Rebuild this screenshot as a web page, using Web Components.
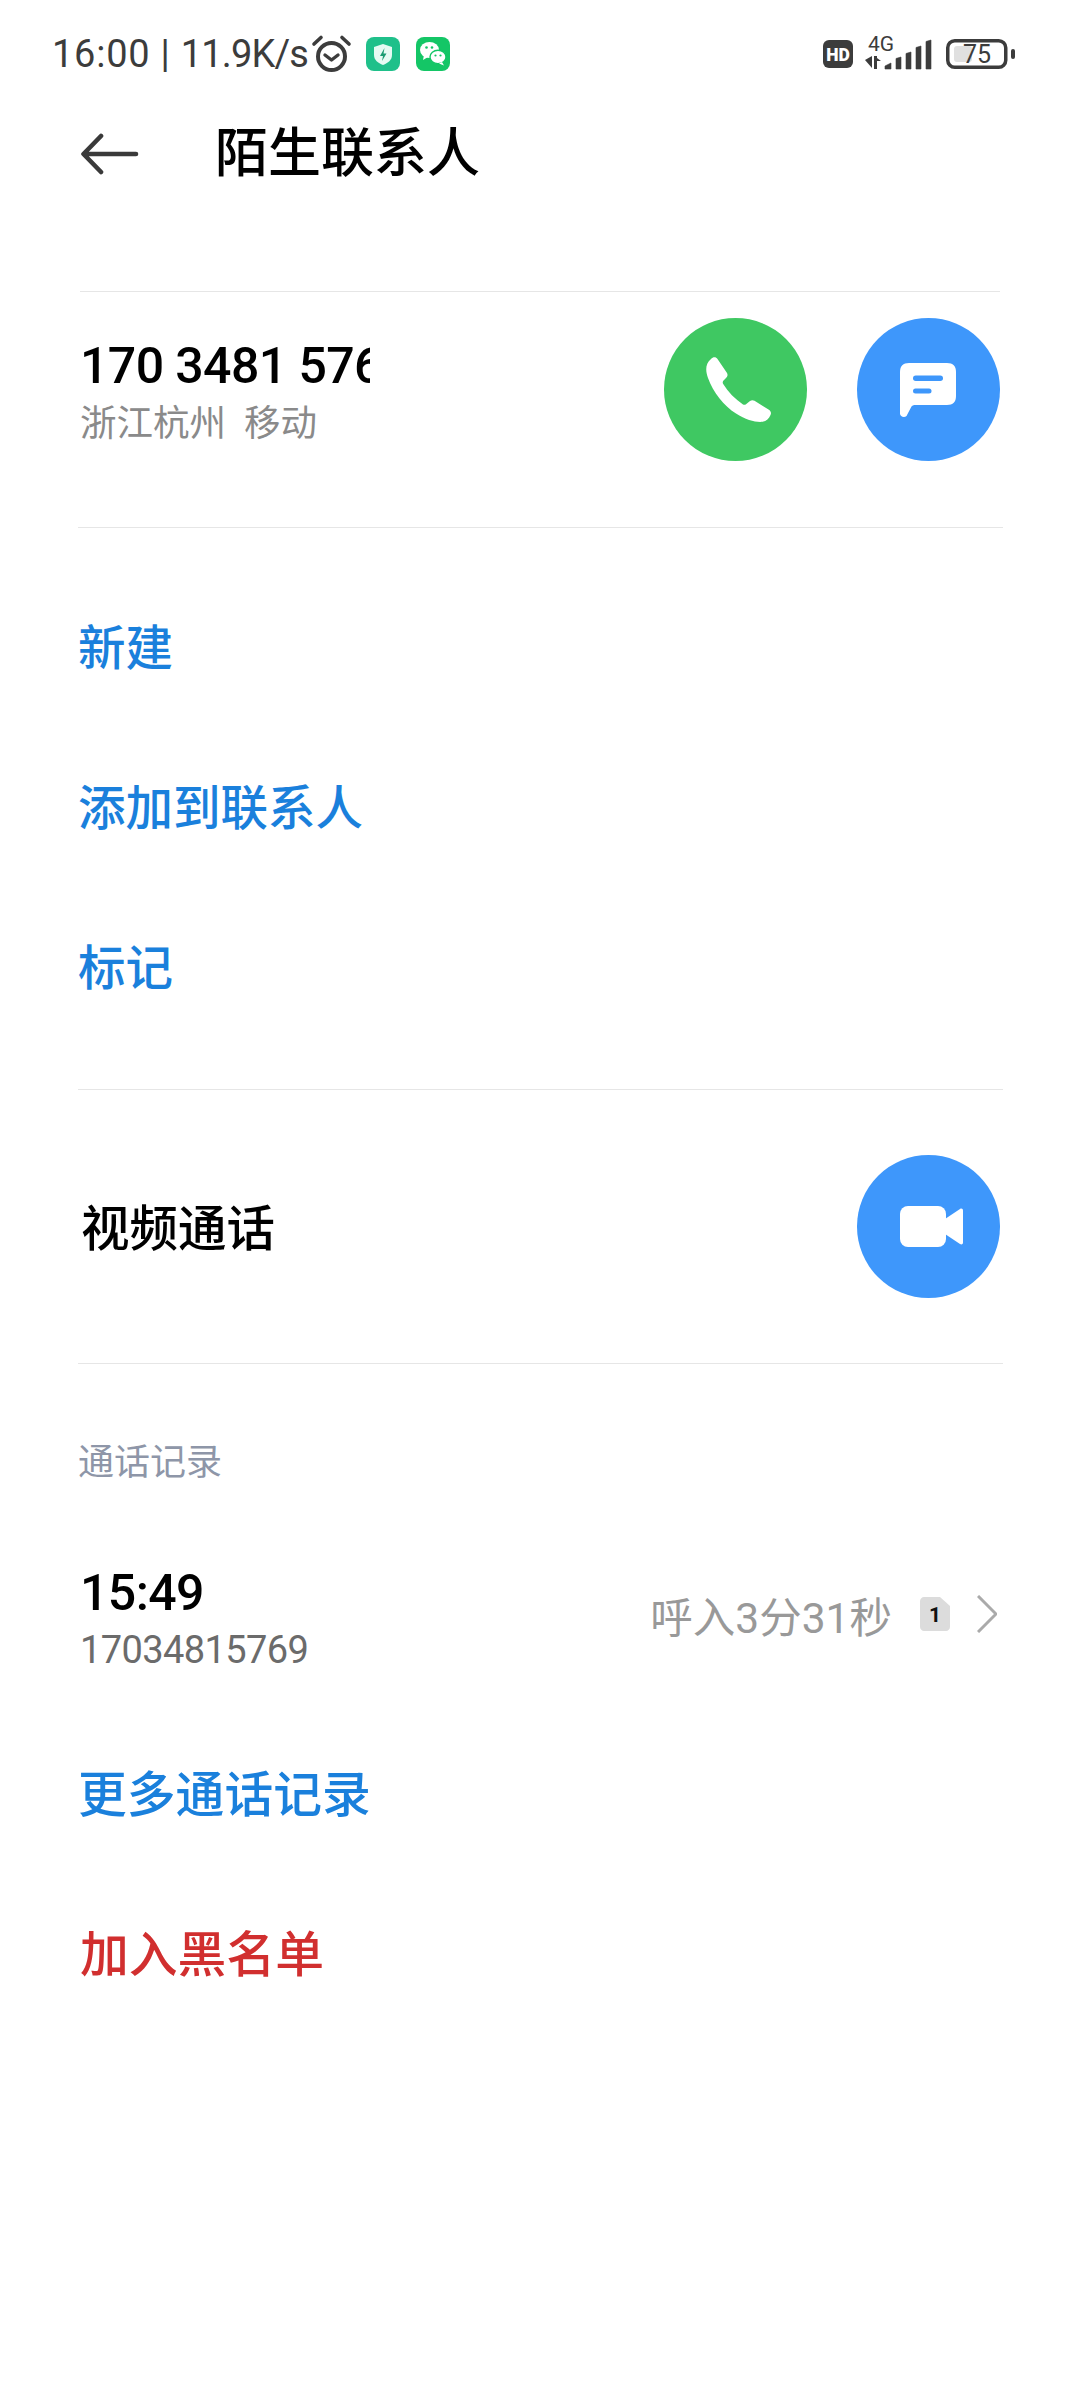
<!DOCTYPE html>
<html lang="zh-CN"><head><meta charset="utf-8"><style>
html,body{margin:0;padding:0;background:#fff}
body{width:1080px;height:2400px;overflow:hidden;font-family:Roboto,"Noto Sans CJK SC",sans-serif}
</style></head><body>
<phone-status></phone-status>
<title-bar>陌生联系人</title-bar>
<h-rule inset="80"></h-rule>
<number-card number="170 3481 5769" place="浙江杭州 移动"></number-card>
<h-rule inset="78"></h-rule>
<action-list>
  <action-row>新建</action-row>
  <action-row>添加到联系人</action-row>
  <action-row>标记</action-row>
</action-list>
<h-rule inset="78"></h-rule>
<video-row>视频通话</video-row>
<h-rule inset="78"></h-rule>
<section-label>通话记录</section-label>
<call-record time="15:49" number="17034815769" detail="呼入3分31秒"></call-record>
<action-row style="margin-top:21px;--fs:48.800px">更多通话记录</action-row>
<action-row tone="danger" style="--fs:48.800px">加入黑名单</action-row>
<script>
function def(name, html, init){
  customElements.define(name, class extends HTMLElement{
    constructor(){super();this.attachShadow({mode:'open'}).innerHTML=html;}
    connectedCallback(){ if(init) init(this); }
  });
}
const CJK='Roboto,"Noto Sans CJK SC",sans-serif';

def('phone-status',`<style>
:host{display:flex;height:102px;box-sizing:border-box;padding:0 65px 0 52px;align-items:flex-start;justify-content:space-between;color:#3c3c3c;font-family:Roboto,sans-serif}
.l,.r{display:flex;align-items:flex-start}
.t{font-size:38px;line-height:46px;margin-top:31px;white-space:nowrap;width:257px}
.a{letter-spacing:.75px}.b{letter-spacing:-.85px}
svg{display:block;flex:none;overflow:visible}
</style>
<div class="l"><span class="t"><span class="a">16:00 | </span><span class="b">11.9K/s</span></span>
<svg style="margin:35px 0 0 3px" width="39" height="37" viewBox="0 0 39 37" fill="none" stroke="#3c3c3c" stroke-linecap="round" stroke-linejoin="round"><circle cx="19.500" cy="21.500" r="13.500" stroke-width="4"/><path d="M13 20l6.500 5 6.500-5" stroke-width="3.400"/><path d="M2 9l7-6.500M37 9l-7-6.500" stroke-width="3.600"/></svg>
<svg style="margin:37px 0 0 15px" width="34" height="34" viewBox="0 0 34 34"><rect width="34" height="34" rx="8" fill="#1fc08a"/><path d="M17 7l9 3v8c0 5-4 8-9 10-5-2-9-5-9-10v-8z" fill="#e6faf3"/><path d="M18.500 11l-4.500 8h3l-1 5 4.500-7.500h-3z" fill="#1b9c72"/></svg>
<svg style="margin:37px 0 0 16px" width="34" height="34" viewBox="0 0 34 34"><rect width="34" height="34" rx="8" fill="#14c666"/><ellipse cx="13.500" cy="13" rx="9.500" ry="8" fill="#fff"/><path d="M8 18l-1 5 5-3z" fill="#fff"/><ellipse cx="22" cy="20" rx="8" ry="6.700" fill="#fff" stroke="#14c666" stroke-width="1.400"/><path d="M26 25l2 3.500-5-2z" fill="#fff"/><circle cx="10.500" cy="10.500" r="1.300" fill="#14c666"/><circle cx="16" cy="10.500" r="1.300" fill="#14c666"/><circle cx="19.500" cy="18.500" r="1.100" fill="#14c666"/><circle cx="24.500" cy="18.500" r="1.100" fill="#14c666"/></svg>
</div>
<div class="r">
<svg style="margin-top:35px" width="192" height="36" viewBox="0 0 192 36">
<rect x="0" y="5" width="30" height="28" rx="6" fill="#3c3c3c"/>
<text x="15" y="25.500" text-anchor="middle" font-family="Roboto,sans-serif" font-weight="900" font-size="17.500" fill="#fff">HD</text>
<text x="45" y="15.500" font-family="Roboto,sans-serif" font-size="21" fill="#3c3c3c">4G</text>
<path d="M42 25l7-4v12zM51 21h3v2l4 3h-4v8h-3z" fill="#3c3c3c"/>
<path d="M62 31l6-3v6h-6zM73 23.500l5-1.500v12h-5zM83 18.500l5-1.500v17h-5zM93 12.500l5-1.500v23h-5zM103 6.500l5-1.500v29h-5z" fill="#3c3c3c" stroke="#3c3c3c" stroke-width=".6" stroke-linejoin="round"/>
<g transform="translate(123 0)"><rect x="1.750" y="5.750" width="58" height="26.500" rx="7" fill="#fff" stroke="#3c3c3c" stroke-width="3.500"/><rect x="8" y="11" width="18" height="16" rx="3" fill="#e0e0e0"/>
<text x="31" y="28" text-anchor="middle" font-family="Roboto,sans-serif" font-size="25" fill="#3c3c3c">75</text><rect x="65" y="14" width="4" height="10" rx="2" fill="#3c3c3c"/></g>
</svg></div>`);

def('title-bar',`<style>
:host{display:flex;align-items:center;height:104px;margin-bottom:85px;padding-left:81px;color:#000}
svg{flex:none;display:block;margin-right:76px}
.t{font-family:${CJK};font-size:53px;font-weight:500;line-height:104px}
</style><svg width="58" height="42" viewBox="0 0 58 42" fill="none" stroke="#3a3a3a" stroke-width="4.600" stroke-linecap="round" stroke-linejoin="round"><path d="M20 3L2.500 21 20 39M3 21h52"/></svg><span class="t"><slot></slot></span>`);

def('h-rule',`<style>:host{display:block;height:1px;background:#e6e6e6}</style>`,el=>{
  const i=+el.getAttribute('inset')||0; el.style.margin=`0 ${i==80?80:77}px 0 ${i}px`;
});

const phone=`<svg width="143" height="143" viewBox="0 0 143 143"><circle cx="71.500" cy="71.500" r="71.500" fill="#3fc862"/><path d="M47 41C49 38.500 52 38.500 53.500 41L63 55C64 57 63.500 58.500 62 60L59.500 62.500C58.500 63.500 58.500 65 59.200 66C64 74 71 81 79 86.500C80 87 81 87 82 86.200L86 83C87.500 82 89 82 90.500 82.800L104.500 91.500C107 93 107.500 95 106.500 97C105 100.500 102.500 103 98.500 103.800C92 104.500 82 102 72 95.500C60 88 49 74 44 60C41.500 53 41 46 47 41z" fill="#fff"/></svg>`;
const msg=`<svg width="143" height="143" viewBox="0 0 143 143"><circle cx="71.500" cy="71.500" r="71.500" fill="#3e97fb"/><path d="M52 45h38c6 0 9 3 9 9v24c0 6-3 9-9 9H58c-1.500 0-2.500.5-3.500 1.500L49.500 98c-2 2-6.500 1-6.500-2.500V54c0-6 3-9 9-9z" fill="#fff"/><rect x="56" y="57.500" width="30" height="5.500" rx="2.750" fill="#3e97fb"/><rect x="56" y="70.500" width="18.500" height="5" rx="2.500" fill="#3e97fb"/></svg>`;
const video=`<svg width="143" height="143" viewBox="0 0 143 143"><circle cx="71.500" cy="71.500" r="71.500" fill="#3e97fb"/><rect x="43" y="51" width="46" height="41" rx="8" fill="#fff"/><path d="M88 64l15-10c1.500-1 3-.2 3 1.500v32c0 1.700-1.500 2.500-3 1.500L88 79z" fill="#fff"/></svg>`;

def('number-card',`<style>
:host{display:flex;height:235px;box-sizing:border-box;padding:26px 80px 0;justify-content:space-between;align-items:flex-start}
.n{font-family:Roboto,sans-serif;font-size:50px;letter-spacing:-.6px;line-height:62px;width:290px;overflow:hidden;white-space:nowrap;color:#000;font-weight:500;margin-top:17px}
.p{font-family:${CJK};font-size:36.500px;word-spacing:9px;line-height:48px;color:#8a8a8a;margin-top:3px}
.b{display:flex;gap:50px}
svg{display:block}
</style><div><div class="n"></div><div class="p"></div></div><div class="b">${phone}${msg}</div>`,el=>{
  el.shadowRoot.querySelector('.n').textContent=el.getAttribute('number');
  el.shadowRoot.querySelector('.p').textContent=el.getAttribute('place');
});

def('action-list',`<style>:host{display:block;padding:36px 0 45px;--fs:47.500px}</style><slot></slot>`);

def('action-row',`<style>
:host{display:flex;align-items:center;height:160px;padding-left:78px;font-family:${CJK};font-size:var(--fs,48px);font-weight:500;color:#1a80dc}
:host([tone=danger]){color:#d12f2f;padding-left:80px}
</style><slot></slot>`);

def('video-row',`<style>
:host{display:flex;align-items:center;justify-content:space-between;height:273px;padding:0 80px 0 81px;font-family:${CJK};font-size:48.500px;font-weight:500;color:#000}
span{display:block;margin-top:-4px}
svg{display:block}
</style><span><slot></slot></span>${video}`);

def('section-label',`<style>
:host{display:block;padding:76px 0 0 78px;font-family:${CJK};font-size:36px;line-height:46px;color:#8e96a8}
</style><slot></slot>`);

def('call-record',`<style>
:host{display:flex;justify-content:space-between;align-items:center;height:150px;margin-top:53px;padding:0 83px 0 80px}
.g{padding-top:8px}
.t{font-family:Roboto,sans-serif;font-size:50px;font-weight:500;line-height:60px;color:#000;letter-spacing:-.6px}
.s{font-family:Roboto,sans-serif;font-size:38px;letter-spacing:-.6px;line-height:46px;color:#6b6b6b;margin-top:4px}
.r{display:flex;align-items:center}
.d{font-family:${CJK};font-size:42.500px;color:#999;margin-right:28px}
svg{display:block}
</style><div class="g"><div class="t"></div><div class="s"></div></div>
<div class="r"><span class="d"></span>
<svg width="30" height="34" viewBox="0 0 30 34" style="margin-right:27px"><path d="M4 0h16l10 9v21c0 2-2 4-4 4H4c-2 0-4-2-4-4V4c0-2 2-4 4-4z" fill="#dcdcdc"/><text x="15" y="25" text-anchor="middle" font-family="Roboto,sans-serif" font-weight="700" font-size="21" fill="#111">1</text></svg>
<svg width="20" height="38" viewBox="0 0 20 38" fill="none" stroke="#aaa" stroke-width="3"><path d="M1 1l18 18L1 37"/></svg></div>`,el=>{
  const s=el.shadowRoot;
  s.querySelector('.t').textContent=el.getAttribute('time');
  s.querySelector('.s').textContent=el.getAttribute('number');
  s.querySelector('.d').textContent=el.getAttribute('detail');
});
</script>
</body></html>
